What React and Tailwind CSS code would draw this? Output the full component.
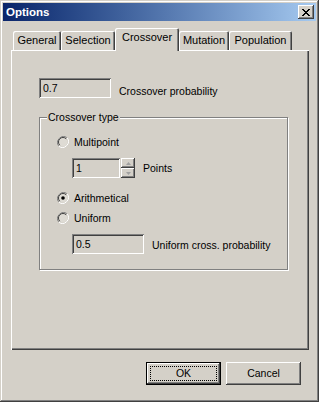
import React from 'react';

const raised =
  'shadow-[inset_-1px_-1px_#404040,inset_1px_1px_#fff,inset_-2px_-2px_#808080,inset_2px_2px_#d4d0c8]';
const sunken =
  'shadow-[inset_1px_1px_#808080,inset_-1px_-1px_#fff,inset_2px_2px_#404040,inset_-2px_-2px_#d4d0c8]';

function Tab({ label, width, selected }) {
  if (selected) {
    return (
      <div
        className={`${width} relative z-10 -mb-px h-[23px] bg-[#d4d0c8] rounded-t-[2px] shadow-[inset_1px_1px_#fff,inset_-1px_0_#404040,inset_-2px_0_#808080] flex justify-center pt-[3px]`}
      >
        {label}
      </div>
    );
  }
  return (
    <div
      className={`${width} h-[19px] rounded-t-[2px] shadow-[inset_1px_1px_#fff,inset_-1px_0_#404040,inset_-2px_0_#808080] flex justify-center pt-[3px]`}
    >
      {label}
    </div>
  );
}

function Radio({ checked }) {
  return (
    <svg width="12" height="12" viewBox="0 0 12 12" className="shrink-0">
      <path d="M10.2 1.8 A6 6 0 0 0 1.8 10.2" fill="none" stroke="#808080" strokeWidth="1" />
      <path d="M1.8 10.2 A6 6 0 0 0 10.2 1.8" fill="none" stroke="#fff" strokeWidth="1" />
      <circle cx="6" cy="6" r="4.5" fill="#dedbd4" />
      <path d="M9.2 2.8 A4.5 4.5 0 0 0 2.8 9.2" fill="none" stroke="#404040" strokeWidth="1" />
      {checked && <circle cx="6" cy="6" r="1.8" fill="#000" />}
    </svg>
  );
}

function TextBox({ value, width }) {
  return (
    <div className={`${width} h-[20px] ${sunken} bg-[#d4d0c8] flex items-center pl-[4px]`}>
      {value}
    </div>
  );
}

export default function App() {
  return (
    <div className="w-[319px] h-[402px] bg-[#d4d0c8] shadow-[inset_-1px_-1px_#404040,inset_1px_1px_#d4d0c8,inset_-2px_-2px_#808080,inset_2px_2px_#fff] flex flex-col font-['Liberation_Sans',Arial,sans-serif] text-[10.5px] leading-[13px] text-black">
      {/* title bar */}
      <div className="mx-[3px] mt-[3px] h-[18px] bg-gradient-to-r from-[#0a246a] to-[#a6caf0] flex items-center justify-between pl-[3px] pr-[2px]">
        <span className="font-bold text-white text-[11.5px]">Options</span>
        <div className={`w-[16px] h-[14px] bg-[#d4d0c8] ${raised} flex items-center justify-center`}>
          <svg width="8" height="7" viewBox="0 0 8 7" shapeRendering="crispEdges">
            <path
              d="M0 0h2v1h-2zM6 0h2v1h-2zM1 1h2v1h-2zM5 1h2v1h-2zM2 2h4v1h-4zM3 3h2v1h-2zM2 4h4v1h-4zM1 5h2v1h-2zM5 5h2v1h-2zM0 6h2v1h-2zM6 6h2v1h-2z"
              fill="#000"
            />
          </svg>
        </div>
      </div>

      {/* tabs */}
      <div className="mt-[7px] ml-[13px] h-[22px] flex items-end text-[11px]">
        <Tab label="General" width="w-[48px]" />
        <Tab label="Selection" width="w-[54px]" />
        <Tab label="Crossover" width="w-[64px]" selected />
        <Tab label="Mutation" width="w-[50px]" />
        <Tab label="Population" width="w-[63px]" />
      </div>

      {/* tab page */}
      <div className="ml-[11px] w-[298px] h-[300px] shadow-[inset_1px_1px_#fff,inset_-1px_-1px_#404040,inset_-2px_-2px_#808080] pl-[28px] pt-[28px]">
        <div className="flex items-center">
          <TextBox value="0.7" width="w-[72px]" />
          <span className="ml-[8px] mt-[6px]">Crossover probability</span>
        </div>

        <div className="relative mt-[19px] w-[249px] h-[153px] border border-[#808080] shadow-[inset_1px_1px_#fff,1px_1px_#fff] pl-[17px] pt-[18px]">
          <span className="absolute left-[7px] -top-[7px] bg-[#d4d0c8] px-px">Crossover type</span>

          <div className="flex items-center h-[12px] gap-[5px]">
            <Radio />
            <span>Multipoint</span>
          </div>

          <div className="mt-[10px] ml-[15px] flex items-center">
            <TextBox value="1" width="w-[48px]" />
            <div className="ml-[1px] w-[14px] h-[20px] flex flex-col">
              <div className={`h-[10px] ${raised} flex items-center justify-center`}>
                <svg width="5" height="3" viewBox="0 0 5 3">
                  <path d="M2.5 0 L5 3 L0 3 Z" fill="#a0a0a0" />
                </svg>
              </div>
              <div className={`h-[10px] ${raised} flex items-center justify-center`}>
                <svg width="5" height="3" viewBox="0 0 5 3">
                  <path d="M0 0 L5 0 L2.5 3 Z" fill="#a0a0a0" />
                </svg>
              </div>
            </div>
            <span className="ml-[8px]">Points</span>
          </div>

          <div className="mt-[14px] flex items-center h-[12px] gap-[5px]">
            <Radio checked />
            <span>Arithmetical</span>
          </div>

          <div className="mt-[8px] flex items-center h-[12px] gap-[5px]">
            <Radio />
            <span>Uniform</span>
          </div>

          <div className="mt-[10px] ml-[15px] flex items-center">
            <TextBox value="0.5" width="w-[72px]" />
            <span className="ml-[8px] mt-[2px]">Uniform cross. probability</span>
          </div>
        </div>
      </div>

      {/* buttons */}
      <div className="mt-[12px] pl-[146px] flex gap-[5px]">
        <button className="w-[75px] h-[23px] border border-black bg-[#d4d0c8] p-0">
          <div className={`w-full h-full ${raised} flex items-center justify-center p-[3px]`}>
            <div className="w-full h-full border border-dotted border-black flex items-center justify-center">
              OK
            </div>
          </div>
        </button>
        <button className={`w-[75px] h-[23px] bg-[#d4d0c8] ${raised} flex items-center justify-center`}>
          Cancel
        </button>
      </div>
    </div>
  );
}
